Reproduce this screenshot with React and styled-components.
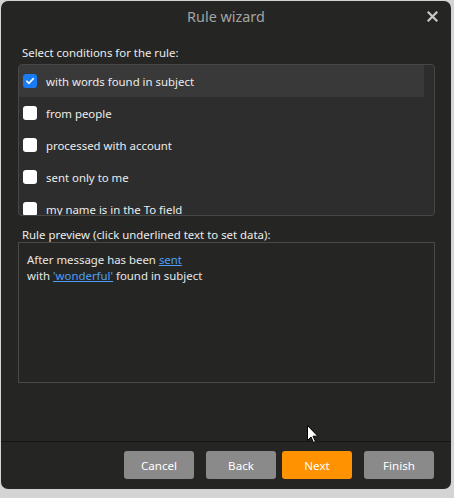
import React from 'react'
import styled, { createGlobalStyle } from 'styled-components'

const GlobalStyle = createGlobalStyle`
  html, body {
    margin: 0;
    padding: 0;
    background: #d4d4d4;
  }
  body {
    font-family: 'Noto Sans', 'Open Sans', sans-serif;
    width: 454px;
    height: 498px;
    overflow: hidden;
  }
`

const conditions = [
  { label: 'with words found in subject', checked: true },
  { label: 'from people' },
  { label: 'processed with account' },
  { label: 'sent only to me' },
  { label: 'my name is in the To field' },
  { label: 'my name is in the Cc field' },
]

const Dialog = styled.div`
  position: relative;
  margin: 1px 3px 0 1px;
  height: 488px;
  background: #252624;
  border-radius: 7px;
  display: flex;
  flex-direction: column;
  color: #e6e6e6;
`

const Header = styled.div`
  position: relative;
  height: 32px;
  display: flex;
  align-items: center;
  justify-content: center;
`

const Title = styled.div`
  font-size: 14.4px;
  color: #a3a3a3;
  margin-top: -2px;
`

const Close = styled.button`
  position: absolute;
  right: 12px;
  top: 8px;
  width: 14px;
  height: 14px;
  padding: 0;
  border: 0;
  background: none;
  display: flex;
  align-items: center;
  justify-content: center;
`

const Body = styled.div`
  flex: 1;
  padding: 12px 16px 0 17px;
  display: flex;
  flex-direction: column;
`

const Label = styled.div`
  font-size: 11.4px;
  color: #ececec;
  padding-left: 4px;
  line-height: 15px;
  margin-bottom: ${p => p.$space || 0}px;
`

const List = styled.div`
  height: 150px;
  background: #2d2d2d;
  border: 1px solid #474747;
  border-radius: 4px;
  overflow: hidden;
  padding-right: 10px;
  margin-bottom: 11px;
`

const Row = styled.div`
  height: 32px;
  display: flex;
  align-items: center;
  gap: 9px;
  padding-left: 4px;
  font-size: 11.4px;
  color: #ececec;
  background: ${p => (p.$active ? '#393939' : 'transparent')};
`

const Box = styled.span`
  width: 14px;
  height: 14px;
  border-radius: 3px;
  background: ${p => (p.$checked ? '#1a7cf5' : '#ffffff')};
  display: flex;
  align-items: center;
  justify-content: center;
  flex-shrink: 0;
`

const Preview = styled.div`
  box-sizing: border-box;
  height: 141px;
  border: 1px solid #4a4a4a;
  padding: 9px 8px;
  font-size: 11.4px;
  line-height: 16px;
  color: #e6e6e6;
`

const Link = styled.a`
  color: #4d9ef6;
  text-decoration: underline;
  cursor: pointer;
`

const Footer = styled.div`
  border-top: 1px solid #161616;
  height: 48px;
  display: flex;
  align-items: flex-start;
  justify-content: flex-end;
  padding: 9px 17px 0 0;
  box-sizing: border-box;
`

const Button = styled.button`
  width: 70px;
  height: 28px;
  margin-left: ${p => p.$gap || 12}px;
  border: 0;
  border-radius: 3px;
  background: ${p => (p.$primary ? '#ff9200' : '#8a8a8a')};
  color: #ffffff;
  font-family: inherit;
  font-size: 11.6px;
`

const Cursor = styled.svg`
  position: absolute;
  left: 306px;
  top: 424px;
`

const Check = () => (
  <svg width="10" height="10" viewBox="0 0 10 10">
    <path d="M1.8 5.2 L4 7.3 L8.3 2.6" fill="none" stroke="#fff" strokeWidth="1.6" strokeLinecap="round" strokeLinejoin="round" />
  </svg>
)

const App = () => (
  <>
    <GlobalStyle />
    <Dialog>
      <Header>
        <Title>Rule wizard</Title>
        <Close aria-label="Close">
          <svg width="11" height="11" viewBox="0 0 11 11">
            <path d="M1.5 1.5 L9.5 9.5 M9.5 1.5 L1.5 9.5" stroke="#c8c8c8" strokeWidth="2.2" strokeLinecap="square" />
          </svg>
        </Close>
      </Header>
      <Body>
        <Label $space={4}>Select conditions for the rule:</Label>
        <List>
          {conditions.map(c => (
            <Row key={c.label} $active={c.checked}>
              <Box $checked={c.checked}>{c.checked && <Check />}</Box>
              {c.label}
            </Row>
          ))}
        </List>
        <Label>Rule preview (click underlined text to set data):</Label>
        <Preview>
          After message has been <Link>sent</Link>
          <br />
          with <Link>'wonderful'</Link> found in subject
        </Preview>
      </Body>
      <Footer>
        <Button>Cancel</Button>
        <Button>Back</Button>
        <Button $primary $gap={6}>Next</Button>
        <Button>Finish</Button>
      </Footer>
      <Cursor width="12" height="19" viewBox="0 0 12 19">
        <path d="M0.5 0.5 L0.5 15.5 L4 12 L6.5 17.5 L8.5 16.6 L6 11.2 L10.8 11.2 Z" fill="#fff" stroke="#000" strokeWidth="1" />
      </Cursor>
    </Dialog>
  </>
)

export default App
